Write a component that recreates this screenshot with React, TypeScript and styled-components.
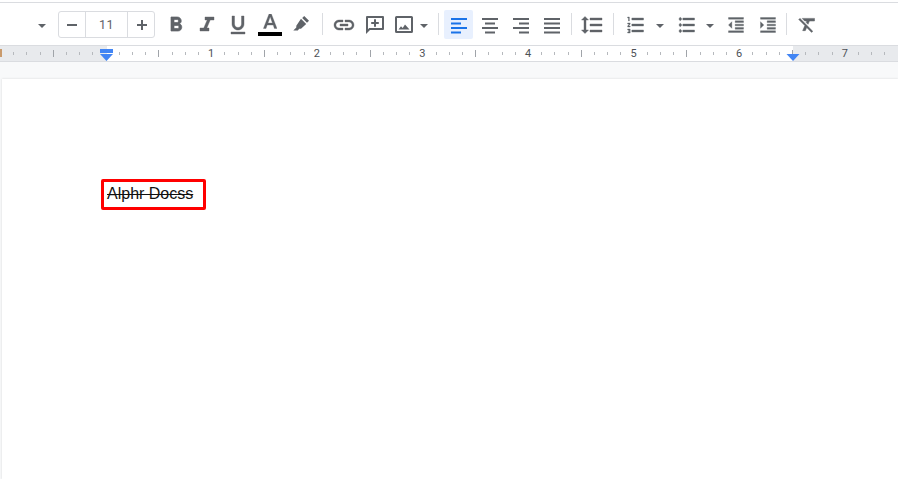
import React from "react";
import styled, { createGlobalStyle } from "styled-components";

const Global = createGlobalStyle`
  html, body { margin: 0; padding: 0; width: 898px; height: 479px; overflow: hidden; background: #f8f9fa; }
  #root { width: 898px; height: 479px; }
`;
const Shell = styled.div`
  width: 898px; height: 479px; display: flex; flex-direction: column; overflow: hidden;
  font-family: "Liberation Sans", Arial, sans-serif;
`;
const TopEdge = styled.div`height: 2px; background: #fff; border-bottom: 1px solid #dadce0;`;
const Toolbar = styled.div`
  height: 42px; background: #fff; display: flex; align-items: center; padding-left: 34px; box-sizing: border-box; flex: none;
`;
const Tool = styled.div<{ $w?: number; $active?: boolean; $mr?: number }>`
  width: ${p => p.$w ?? 31}px; height: 29px; flex: none; display: flex; align-items: center; justify-content: center;
  border-radius: 2px; margin: 1px ${p => p.$mr ?? 0}px 0 0;
  background: ${p => (p.$active ? "#e8f0fe" : "transparent")};
  color: ${p => (p.$active ? "#1a73e8" : "#5f6368")};
`;
const Caret = styled.div<{ $ml?: number; $mr?: number }>`
  width: 0; height: 0; flex: none; border-left: 4.5px solid transparent; border-right: 4.5px solid transparent;
  border-top: 4.5px solid #5f6368; margin: 3px ${p => p.$mr ?? 0}px 0 ${p => p.$ml ?? 0}px;
`;
const Sep = styled.div<{ $ml: number; $mr: number }>`
  width: 1px; height: 22px; background: #dadce0; flex: none; margin: 0 ${p => p.$mr}px 0 ${p => p.$ml}px;
`;
const Stepper = styled.div`
  width: 97px; height: 27px; box-sizing: border-box; border: 1px solid #dadce0; border-radius: 3px; display: flex; flex: none;
  margin: 1px 5px 0 8px; color: #5f6368;
`;
const StepBtn = styled.div<{ $pl?: number; $pr?: number }>`
  width: 26px; box-sizing: border-box; padding: 0 ${p => p.$pr ?? 0}px 0 ${p => p.$pl ?? 0}px;
  display: flex; align-items: center; justify-content: center; flex: none;
`;
const StepValue = styled.div`
  flex: 1; border-left: 1px solid #dadce0; border-right: 1px solid #dadce0; display: flex; align-items: center; justify-content: center;
  font: 12.5px Roboto, "Liberation Sans", sans-serif; color: #5f6368; letter-spacing: .5px;
`;
const RulerBar = styled.div`flex: none; border-top: 1px solid #dadce0; border-bottom: 1px solid #dadce0; box-sizing: border-box; height: 17px; background: #fff;`;
const RulerSvg = styled.svg`display: block; width: 898px; height: 15px;`;
const Canvas = styled.div`flex: 1; padding: 17px 0 0 2px; background: #f8f9fa; display: flex; min-height: 0;`;
const Page = styled.div`
  flex: 1; background: #fff; box-shadow: 0 0 2px rgba(60,64,67,.18); padding: 100px 0 0 99px;
`;
const Highlight = styled.div`
  width: 105px; height: 31px; box-sizing: border-box; border: 3px solid #f00; border-radius: 2px;
  display: flex; align-items: center; padding: 0 0 2px 3px;
`;
const DocText = styled.span`
  font-size: 16px; color: #111; text-decoration: line-through; white-space: nowrap;
`;
const ColorBar = styled.div`width: 24px; height: 4px; background: #000; margin-top: 3px;`;
const Stack = styled.div`display: flex; flex-direction: column; align-items: center; margin-top: 1px;`;
const IconSvg = styled.svg<{ $dy?: number }>`display: block; flex: none; margin-top: ${p => p.$dy ?? 0}px;`;

const Ic = ({ d, w = 24, h = 24, dy = 0, vb = "0 0 24 24", bold = 0.4 }: { d: string; w?: number; h?: number; dy?: number; vb?: string; bold?: number }) => (
  <IconSvg $dy={dy} width={w} height={h} viewBox={vb} preserveAspectRatio="none" fill="currentColor" stroke="currentColor" strokeWidth={bold} fillRule="evenodd"><path d={d} /></IconSvg>
);

const V18 = "0 0 18 18";
const P = {
  bold: "M15.6 10.79c.97-.67 1.65-1.77 1.65-2.79 0-2.26-1.75-4-4-4H7v14h7.04c2.09 0 3.71-1.7 3.71-3.79 0-1.52-.86-2.82-2.15-3.42zM10 6.5h3c.83 0 1.5.67 1.5 1.5s-.67 1.500-1.500 1.500h-3v-3zm3.500 9H10v-3h3.500c.83 0 1.500.67 1.500 1.500s-.67 1.500-1.500 1.500z",
  italic: "M10 4v3h2.21l-3.42 8H5v3h9v-3h-2.21l3.42-8H19V4z",
  under: "M12 17c3.31 0 6-2.69 6-6V3h-2.500v8c0 1.930-1.570 3.500-3.500 3.500S8.500 12.930 8.500 11V3H6v8c0 3.310 2.690 6 6 6zm-7 2v2h14v-2H5z",
  letterA: "M6 0h2.400L14 14.500h-2.600l-1.200-3.400H4.200L3 14.500H.4zM5 9h4.400L7.200 2.800z",
  marker: "M11.200 0L16 4.800l-2 2L9.200 2zM8 2.800l5.200 5.200-5.200 4.800H6.200L4.800 14.500H.3l3-3V9.800z",
  link: "M3.900 12c0-1.710 1.390-3.100 3.100-3.100h4V7H7c-2.760 0-5 2.240-5 5s2.240 5 5 5h4v-1.900H7c-1.710 0-3.100-1.390-3.100-3.100zM8 13h8v-2H8v2zm9-6h-4v1.900h4c1.710 0 3.100 1.390 3.100 3.100s-1.390 3.100-3.100 3.100h-4V17h4c2.760 0 5-2.240 5-5s-2.240-5-5-5z",
  comment: "M1 0h16a1 1 0 0 1 1 1v12a1 1 0 0 1-1 1H4l-4 4V1a1 1 0 0 1 1-1zM2 2v11.200L3.200 12H16V2zM8 3.200h2V6h2.800v2H10v2.800H8V8H5.200V6H8z",
  image: "M1.500 0h15A1.500 1.500 0 0 1 18 1.500v14a1.500 1.500 0 0 1-1.500 1.500h-15A1.500 1.500 0 0 1 0 15.500v-14A1.500 1.500 0 0 1 1.500 0zM2 2v13h14V2zM3.500 13.500l2.500-3.200 1.700 1.700 2.300-3.500 4.500 5z",
  left: "M1 2h16v2H1zM1 6.500h10v2H1zM1 11h16v2H1zM1 15.500h10v2H1z",
  center: "M1 2h16v2H1zM4 6.500h10v2H4zM1 11h16v2H1zM4 15.500h10v2H4z",
  right: "M1 2h16v2H1zM7 6.500h10v2H7zM1 11h16v2H1zM7 15.500h10v2H7z",
  justify: "M1 2h16v2H1zM1 6.500h16v2H1zM1 11h16v2H1zM1 15.500h16v2H1z",
  spacing: "M6 7h2.500L5 3.500 1.500 7H4v10H1.500L5 20.500 8.500 17H6V7zm4-2v2h12V5H10zm0 14h12v-2H10v2zm0-6h12v-2H10v2z",
  bullets: "M4 10.500c-.83 0-1.500.67-1.500 1.500s.67 1.500 1.500 1.500 1.500-.67 1.500-1.500-.67-1.500-1.500-1.500zm0-6c-.83 0-1.500.67-1.500 1.500S3.170 7.500 4 7.500 5.500 6.830 5.500 6 4.830 4.500 4 4.500zm0 12c-.83 0-1.500.68-1.500 1.500s.68 1.500 1.500 1.500 1.500-.68 1.500-1.500-.67-1.500-1.500-1.500zM7 19h14v-2H7v2zm0-6h14v-2H7v2zm0-8v2h14V5H7z",
  numbers: "M2 17h2v.5H3v1h1v.5H2v1h3v-4H2v1zm1-9h1V4H2v1h1v3zm-1 3h1.800L2 13.100v.9h3v-1H3.200L5 10.900V10H2v1zm5-6v2h14V5H7zm0 14h14v-2H7v2zm0-6h14v-2H7v2z",
  outdent: "M11 17h10v-2H11v2zm-8-5l4 4V8l-4 4zm0 9h18v-2H3v2zM3 3v2h18V3H3zm8 6h10V7H11v2zm0 4h10v-2H11v2z",
  indent: "M3 21h18v-2H3v2zM3 8v8l4-4-4-4zm8 9h10v-2H11v2zM3 3v2h18V3H3zm8 6h10V7H11v2zm0 4h10v-2H11v2z",
  clear: "M3.270 5L2 6.270l6.970 6.970L6.500 19h3l1.570-3.660L16.730 21 18 19.730 3.550 5.270 3.270 5zM6 5v.18L8.820 8h2.400l-.72 1.680 2.100 2.100L14.210 8H20V5H6z",
};

const inch = 105.6;
const origin = 105.6;

const Ruler = () => {
  const ticks: React.ReactNode[] = [];
  for (let i = -8; i <= 60; i++) {
    const x = Math.round(origin + (i * inch) / 8) + 0.5;
    if (i % 8 === 0) continue;
    const long = i % 4 === 0;
    ticks.push(<line key={i} x1={x} x2={x} y1={long ? 4 : 6} y2={long ? 11 : 9} stroke={long ? "#a0a4a9" : "#b6b9bd"} strokeWidth="1" />);
  }
  const labels = [1, 2, 3, 4, 5, 6, 7];
  return (
    <RulerSvg viewBox="0 0 898 15">
      <rect x="0" y="0" width="107" height="15" fill="#e8eaed" />
      <rect x="793" y="0" width="105" height="15" fill="#e8eaed" />
      {ticks}
      <rect x="0" y="3" width="2" height="8" fill="#c99a6c" />
      {labels.map(n => (
        <text key={n} x={origin + n * inch} y="11" fontSize="11" fontFamily="Roboto, sans-serif" fill="#4d5156" textAnchor="middle">{n}</text>
      ))}
      <rect x="100" y="3" width="13" height="4" fill="#4285f4" />
      <path d="M100 8h13l-6.500 7z" fill="#4285f4" />
      <path d="M786.500 8h13l-6.500 7z" fill="#4285f4" />
    </RulerSvg>
  );
};

export default function App() {
  return (
    <Shell>
      <Global />
      <TopEdge />
      <Toolbar>
        <Tool $w={16}><Caret /></Tool>
        <Stepper>
          <StepBtn $pr={1}><svg width="12" height="12" viewBox="0 0 12 12"><rect x="1" y="5" width="10" height="2" fill="currentColor" /></svg></StepBtn>
          <StepValue>11</StepValue>
          <StepBtn $pl={2}><svg width="12" height="12" viewBox="0 0 12 12"><path d="M5 1h2v4h4v2H7v4H5V7H1V5h4z" fill="currentColor" /></svg></StepBtn>
        </Stepper>
        <Tool><Ic d={P.bold} dy={1} bold={0.7} /></Tool>
        <Tool><Ic d={P.italic} dy={1} /></Tool>
        <Tool $w={32}><Ic d={P.under} dy={1} /></Tool>
        <Tool $w={31}>
          <Stack>
            <Ic d={P.letterA} w={14} h={15} vb="0 0 14 15" bold={0.3} />
            <ColorBar />
          </Stack>
        </Tool>
        <Tool><Ic d={P.marker} w={16} h={15} vb="0 0 16 15" bold={0} dy={-2} /></Tool>
        <Sep $ml={6} $mr={5} />
        <Tool><Ic d={P.link} /></Tool>
        <Tool><Ic d={P.comment} w={18} h={18} vb={V18} bold={0} /></Tool>
        <Tool $w={28}><Ic d={P.image} w={18} h={17} vb="0 0 18 17" bold={0} /></Tool>
        <Caret $ml={2} $mr={10} />
        <Sep $ml={0} $mr={5} />
        <Tool $w={29} $mr={1} $active><Ic d={P.left} w={18} h={18} vb={V18} bold={0} /></Tool>
        <Tool><Ic d={P.center} w={18} h={18} vb={V18} bold={0} /></Tool>
        <Tool><Ic d={P.right} w={18} h={18} vb={V18} bold={0} /></Tool>
        <Tool><Ic d={P.justify} w={18} h={18} vb={V18} bold={0} /></Tool>
        <Sep $ml={4} $mr={4} />
        <Tool><Ic d={P.spacing} /></Tool>
        <Sep $ml={6} $mr={6} />
        <Tool><Ic d={P.numbers} w={20} /></Tool>
        <Caret $ml={5} $mr={7} />
        <Tool><Ic d={P.bullets} w={20} /></Tool>
        <Caret $ml={4} $mr={6} />
        <Tool $w={32}><Ic d={P.outdent} w={20} h={20} /></Tool>
        <Tool><Ic d={P.indent} w={20} h={20} /></Tool>
        <Sep $ml={3} $mr={5} />
        <Tool><Ic d={P.clear} w={21} h={21} bold={0.6} /></Tool>
      </Toolbar>
      <RulerBar><Ruler /></RulerBar>
      <Canvas>
        <Page>
          <Highlight><DocText>Alphr Docss</DocText></Highlight>
        </Page>
      </Canvas>
    </Shell>
  );
}
